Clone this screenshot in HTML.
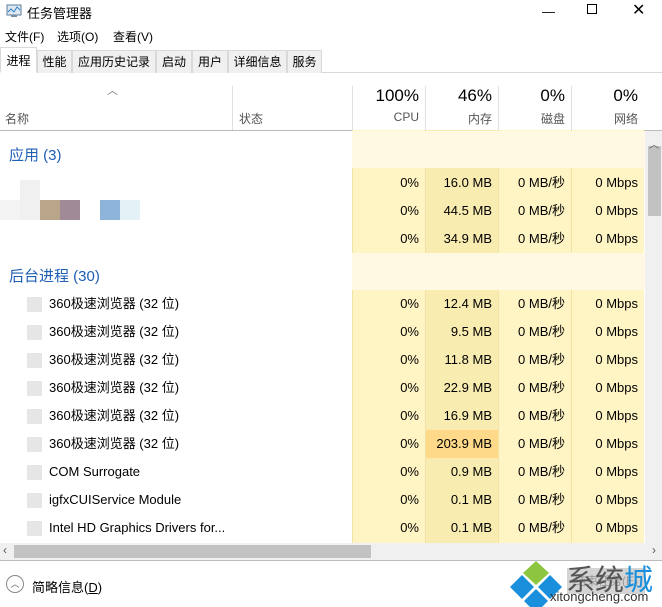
<!DOCTYPE html>
<html><head><meta charset="utf-8"><style>
*{margin:0;padding:0;box-sizing:border-box}
body{width:662px;height:607px;overflow:hidden;background:#fff;font-family:"Liberation Sans","Noto Sans CJK SC",sans-serif;font-size:12px;color:#000;position:relative}
.a{position:absolute}
.r{text-align:right}
.tab{position:absolute;top:50px;height:23px;background:#f0f0f0;border:1px solid #d9d9d9;border-bottom:none;font-size:12px;line-height:22px;text-align:center}
.col{position:absolute;top:130px;height:413px;width:73px;background:#fff4c4;border-left:1px solid #f1e3a6}
.cell{position:absolute;font-size:13px;text-align:right;width:66px;height:18px;line-height:18px;white-space:nowrap}
.nm{position:absolute;left:49px;font-size:13px;height:18px;line-height:18px}
.ic{position:absolute;left:27px;width:15px;height:15px;background:#e6e6e6}
</style></head><body>
<svg class="a" style="left:6px;top:4px" width="16" height="14"><rect x="1" y="1" width="14" height="10" fill="#dfe9f3" stroke="#5b7d9c"/><polyline points="2,8 5,5 8,8 11,3 14,6" fill="none" stroke="#2d7fc4"/><rect x="5" y="11" width="6" height="2" fill="#7a8da0"/></svg>
<div class="a" style="left:27px;top:3px;font-size:13px">任务管理器</div>
<div class="a" style="left:542px;top:4px;font-size:13px">—</div>
<div class="a" style="left:587px;top:4px;width:10px;height:10px;border:1px solid #000"></div>
<div class="a" style="left:632px;top:0px;font-size:16px">✕</div>
<div class="a" style="left:5px;top:28px;font-size:12px">文件(F)</div>
<div class="a" style="left:57px;top:28px;font-size:12px">选项(O)</div>
<div class="a" style="left:113px;top:28px;font-size:12px">查看(V)</div>
<div class="a" style="left:0;top:72px;width:662px;height:1px;background:#d9d9d9"></div>
<div class="tab" style="left:0;top:47px;width:37px;height:26px;background:#fff;border-bottom:1px solid #fff;line-height:26px">进程</div>
<div class="tab" style="left:37px;width:35px">性能</div>
<div class="tab" style="left:72px;width:84px">应用历史记录</div>
<div class="tab" style="left:156px;width:36px">启动</div>
<div class="tab" style="left:192px;width:36px">用户</div>
<div class="tab" style="left:228px;width:59px">详细信息</div>
<div class="tab" style="left:287px;width:35px">服务</div>
<div class="a" style="left:107px;top:82px;color:#777;font-size:11px">︿</div>
<div class="a" style="left:5px;top:110px;color:#555">名称</div>
<div class="a" style="left:232px;top:86px;width:1px;height:44px;background:#e0e0e0"></div>
<div class="a" style="left:239px;top:110px;color:#555">状态</div>
<div class="a" style="left:0;top:130px;width:662px;height:1px;background:#bbb"></div>
<div class="a r" style="left:353px;top:86px;width:66px;font-size:17px">100%</div>
<div class="a r" style="left:426px;top:86px;width:66px;font-size:17px">46%</div>
<div class="a r" style="left:499px;top:86px;width:66px;font-size:17px">0%</div>
<div class="a r" style="left:572px;top:86px;width:66px;font-size:17px">0%</div>
<div class="a r" style="left:353px;top:110px;width:66px;color:#555">CPU</div>
<div class="a r" style="left:426px;top:110px;width:66px;color:#555">内存</div>
<div class="a r" style="left:499px;top:110px;width:66px;color:#555">磁盘</div>
<div class="a r" style="left:572px;top:110px;width:66px;color:#555">网络</div>
<div class="a" style="left:352px;top:86px;width:1px;height:44px;background:#e0e0e0"></div>
<div class="a" style="left:425px;top:86px;width:1px;height:44px;background:#e0e0e0"></div>
<div class="a" style="left:498px;top:86px;width:1px;height:44px;background:#e0e0e0"></div>
<div class="a" style="left:571px;top:86px;width:1px;height:44px;background:#e0e0e0"></div>
<div class="col" style="left:352px"></div>
<div class="col" style="left:425px;background:#f9ecb0"></div>
<div class="col" style="left:498px"></div>
<div class="col" style="left:571px"></div>
<div class="a" style="left:352px;top:131px;width:293px;height:37px;background:#fff9e4"></div>
<div class="a" style="left:352px;top:253px;width:293px;height:37px;background:#fff9e4"></div>
<div class="a" style="left:426px;top:430px;width:72px;height:28px;background:#ffd98a"></div>
<div class="a" style="left:9px;top:144px;font-size:15px;color:#1e5fb4">应用 (3)</div>
<div class="a" style="left:9px;top:265px;font-size:15px;color:#1e5fb4">后台进程 (30)</div>
<div class="a" style="left:20px;top:180px;width:20px;height:40px;background:#f0f0f0"></div>
<div class="a" style="left:40px;top:200px;width:20px;height:20px;background:#b8a58a"></div>
<div class="a" style="left:60px;top:200px;width:20px;height:20px;background:#a08a98"></div>
<div class="a" style="left:100px;top:200px;width:20px;height:20px;background:#8fb4dc"></div>
<div class="a" style="left:120px;top:200px;width:20px;height:20px;background:#e4f2f8"></div>
<div class="a" style="left:0;top:200px;width:20px;height:20px;background:#f4f4f4"></div>
<div id="rows"></div>
<script>
var d=[["",183,"16.0"],["",211,"44.5"],["",239,"34.9"],
["360极速浏览器 (32 位)",304,"12.4"],["360极速浏览器 (32 位)",332,"9.5"],["360极速浏览器 (32 位)",360,"11.8"],["360极速浏览器 (32 位)",388,"22.9"],["360极速浏览器 (32 位)",416,"16.9"],["360极速浏览器 (32 位)",444,"203.9"],["COM Surrogate",472,"0.9"],["igfxCUIService Module",500,"0.1"],["Intel HD Graphics Drivers for...",528,"0.1"]];
var h="";d.forEach(function(r){var t=r[1]-9;
if(r[0])h+='<div class="ic" style="top:'+(t+2)+'px"></div><div class="nm" style="top:'+t+'px">'+r[0]+'</div>';
h+='<div class="cell" style="left:353px;top:'+t+'px">0%</div><div class="cell" style="left:426px;top:'+t+'px">'+r[2]+' MB</div><div class="cell" style="left:499px;top:'+t+'px">0 MB/秒</div><div class="cell" style="left:572px;top:'+t+'px">0 Mbps</div>';});
document.getElementById("rows").innerHTML=h;
</script>
<div class="a" style="left:645px;top:131px;width:17px;height:412px;background:#f0f0f0"></div>
<div class="a" style="left:648px;top:146px;width:13px;height:70px;background:#c2c2c2"></div>
<div class="a" style="left:649px;top:136px;font-size:10px;color:#555">︿</div>
<div class="a" style="left:0;top:543px;width:662px;height:17px;background:#f0f0f0"></div>
<div class="a" style="left:14px;top:545px;width:357px;height:13px;background:#c2c2c2"></div>
<div class="a" style="left:3px;top:543px;font-size:12px;color:#555">‹</div>
<div class="a" style="left:652px;top:543px;font-size:12px;color:#555">›</div>
<div class="a" style="left:0;top:560px;width:662px;height:1px;background:#bbb"></div>
<div class="a" style="left:6px;top:575px;width:18px;height:18px;border:1px solid #888;border-radius:50%;font-size:9px;text-align:center;line-height:16px;color:#666">︿</div>
<div class="a" style="left:32px;top:577px;font-size:13px">简略信息(<u>D</u>)</div>
<div class="a" style="left:567px;top:568px;width:78px;height:26px;background:#d4d4d4;color:#999;font-size:12px;line-height:26px;text-align:center">结束任务(E)</div>
<svg class="a" style="left:505px;top:558px" width="60" height="49">
<polygon points="31,3 44,15 31,27 18,15" fill="#8cc63f"/>
<polygon points="17,17 29,29 17,41 5,29" fill="#1a8fdc"/>
<polygon points="45,17 57,29 45,41 33,29" fill="#1a8fdc"/>
<polygon points="31,31 43,43 31,55 19,43" fill="#1a8fdc"/>
</svg>
<div class="a" style="left:566px;top:557px;font-size:29px;color:#555">系统<span style="color:#1a8fdc">城</span></div>
<div class="a" style="left:550px;top:589px;font-size:13px;color:#333">xitongcheng.com</div>
</body></html>
